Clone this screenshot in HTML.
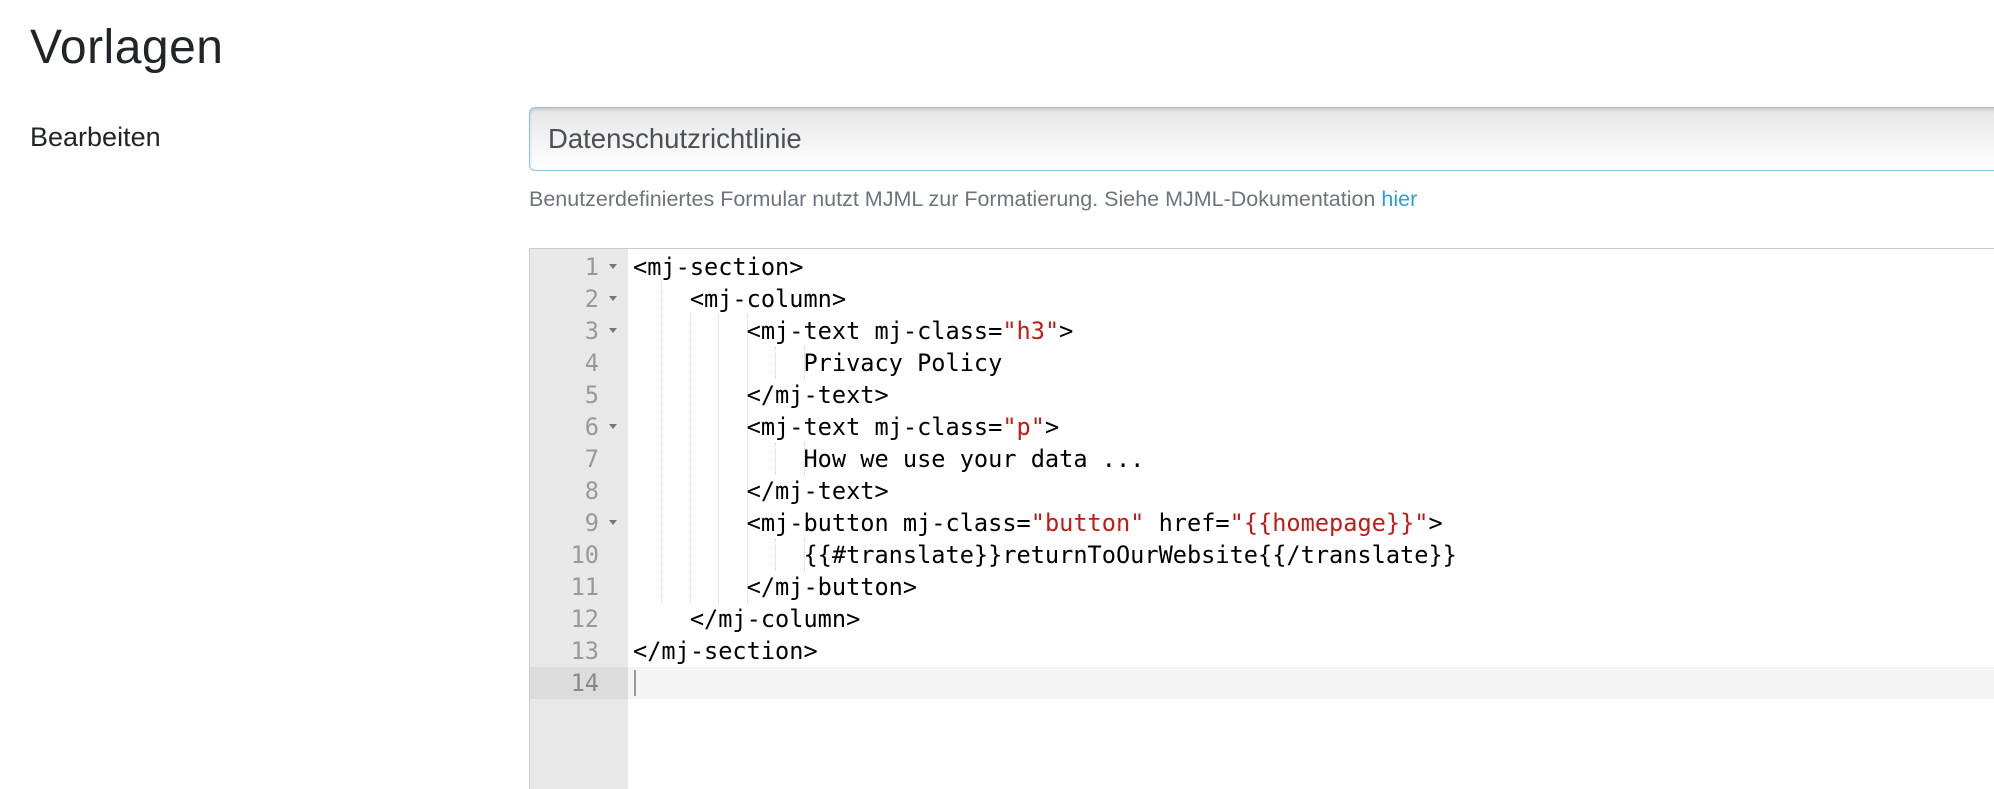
<!DOCTYPE html>
<html><head><meta charset="utf-8"><style>
html,body{margin:0;padding:0;background:#fff;width:1994px;height:776px;overflow:hidden;font-family:"Liberation Sans","DejaVu Sans",sans-serif;color:#212529}
.t{position:absolute;left:30px;top:20px;font-size:48px;font-weight:300;letter-spacing:0.5px}
.l{position:absolute;left:30px;top:122px;font-size:27px}
.inp{position:absolute;left:529px;top:107px;width:1480px;height:64px;border:1px solid #80c6e4;border-radius:6px;background:linear-gradient(#e6e6e6,#fff);box-shadow:inset 0 2px 3px rgba(0,0,0,.12);box-sizing:border-box}
.inp span{position:absolute;left:18px;top:15px;font-size:27.5px;color:#4a5058}
.h{position:absolute;left:529px;top:187px;font-size:21.5px;color:#6c757d}
.h a{color:#2a9fd6}
.ed{position:absolute;left:529px;top:248px;width:1480px;height:540px;border:1px solid #ccc;border-right:none;border-bottom:none;background:#fff}
.g{position:absolute;left:0;top:0;width:98px;height:100%;background:#e8e8e8}
.ln{position:absolute;left:0;width:98px;height:32px;font:23.6px "DejaVu Sans Mono",monospace;color:#999;line-height:32px}
.ln b{position:absolute;right:29px;font-weight:normal}
.ln i{position:absolute;left:79px;top:13px;width:0;height:0;border-left:4px solid transparent;border-right:4px solid transparent;border-top:5px solid #777}
.c{position:absolute;left:103px;height:32px;font:23.6px "DejaVu Sans Mono",monospace;line-height:32px;white-space:pre;color:#000}
.s{color:#c41a16}
.al{position:absolute;left:98px;top:418px;width:1400px;height:32px;background:#f4f4f4}
.ag{position:absolute;left:0;top:418px;width:98px;height:32px;background:#dcdcdc}
.gd{position:absolute;width:0;border-left:1px dotted #d0d0d0}
.cur{position:absolute;left:104px;top:421px;width:2px;height:26px;background:#999}
</style></head><body>
<div class="t">Vorlagen</div>
<div class="l">Bearbeiten</div>
<div class="inp"><span>Datenschutzrichtlinie</span></div>
<div class="h">Benutzerdefiniertes Formular nutzt MJML zur Formatierung. Siehe MJML-Dokumentation <a>hier</a></div>
<div class="ed">
<div class="g"></div>
<div class="ag"></div>
<div class="al"></div>
<div class="ln" style="top:2px"><b>1</b><i></i></div>
<div class="ln" style="top:34px"><b>2</b><i></i></div>
<div class="ln" style="top:66px"><b>3</b><i></i></div>
<div class="ln" style="top:98px"><b>4</b></div>
<div class="ln" style="top:130px"><b>5</b></div>
<div class="ln" style="top:162px"><b>6</b><i></i></div>
<div class="ln" style="top:194px"><b>7</b></div>
<div class="ln" style="top:226px"><b>8</b></div>
<div class="ln" style="top:258px"><b>9</b><i></i></div>
<div class="ln" style="top:290px"><b>10</b></div>
<div class="ln" style="top:322px"><b>11</b></div>
<div class="ln" style="top:354px"><b>12</b></div>
<div class="ln" style="top:386px"><b>13</b></div>
<div class="ln" style="top:418px;color:#888"><b>14</b></div>
<div class="gd" style="left:131px;top:34px;height:320px"></div>
<div class="gd" style="left:160px;top:66px;height:288px"></div>
<div class="gd" style="left:188px;top:66px;height:288px"></div>
<div class="gd" style="left:217px;top:66px;height:288px"></div>
<div class="gd" style="left:245px;top:98px;height:32px"></div>
<div class="gd" style="left:245px;top:194px;height:32px"></div>
<div class="gd" style="left:245px;top:290px;height:32px"></div>
<div class="gd" style="left:274px;top:98px;height:32px"></div>
<div class="gd" style="left:274px;top:194px;height:32px"></div>
<div class="gd" style="left:274px;top:290px;height:32px"></div>
<div class="c" style="top:2px">&lt;mj-section&gt;</div>
<div class="c" style="top:34px">    &lt;mj-column&gt;</div>
<div class="c" style="top:66px">        &lt;mj-text mj-class=<span class="s">"h3"</span>&gt;</div>
<div class="c" style="top:98px">            Privacy Policy</div>
<div class="c" style="top:130px">        &lt;/mj-text&gt;</div>
<div class="c" style="top:162px">        &lt;mj-text mj-class=<span class="s">"p"</span>&gt;</div>
<div class="c" style="top:194px">            How we use your data ...</div>
<div class="c" style="top:226px">        &lt;/mj-text&gt;</div>
<div class="c" style="top:258px">        &lt;mj-button mj-class=<span class="s">"button"</span> href=<span class="s">"{{homepage}}"</span>&gt;</div>
<div class="c" style="top:290px">            {{#translate}}returnToOurWebsite{{/translate}}</div>
<div class="c" style="top:322px">        &lt;/mj-button&gt;</div>
<div class="c" style="top:354px">    &lt;/mj-column&gt;</div>
<div class="c" style="top:386px">&lt;/mj-section&gt;</div>
<div class="cur"></div>
</div>
</body></html>
